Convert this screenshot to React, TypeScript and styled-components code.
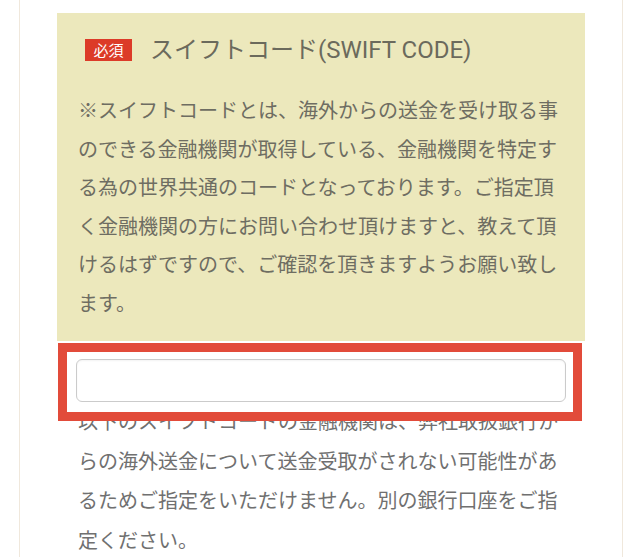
import React from 'react'
import styled, { createGlobalStyle } from 'styled-components'

const GlobalStyle = createGlobalStyle`
    html, body {
        margin: 0;
        padding: 0;
        background: #ffffff;
    }
    body {
        font-family: Roboto, "Noto Sans CJK JP", sans-serif;
    }
`

const Page = styled.div`
    width: 640px;
    height: 557px;
    overflow: hidden;
`

const Card = styled.div`
    margin: 0 17px 0 19px;
    min-height: 557px;
    box-sizing: border-box;
    border-left: 1px solid #f0e8dc;
    border-right: 1px solid #f0e8dc;
    padding: 13px 37px 0 37px;
`

const Panel = styled.div`
    background: #ece8bc;
    padding: 25px 21px 19px 21px;
`

const Heading = styled.div`
    display: flex;
    align-items: center;
    height: 25px;
    padding-left: 7px;
    margin-bottom: 28px;
`

const Badge = styled.span`
    display: inline-flex;
    align-items: center;
    justify-content: center;
    width: 47px;
    height: 22px;
    margin-top: -2px;
    background: #dc3b28;
    color: #ffffff;
    font-size: 15px;
    font-family: "Noto Sans CJK JP", sans-serif;
    margin-right: 18px;
`

const Title = styled.h2`
    margin: 0;
    font-size: 24px;
    font-weight: 400;
    color: #6b6a5c;
    line-height: 25px;
    white-space: nowrap;
`

const Note: any = styled.p`
    margin: ${(p: any) => p['data-plain'] ? '-11px 0 0 0' : '0'};
    padding: ${(p: any) => p['data-plain'] ? '0 21px' : '0'};
    font-size: 20px;
    line-height: ${(p: any) => p['data-plain'] ? '39.5px' : '38.5px'};
    color: ${(p: any) => p['data-plain'] ? '#707070' : '#6e6d62'};
    font-family: "Noto Sans CJK JP", sans-serif;
    line-break: normal;
`

const Field = styled.div`
    margin: 11px 12px 0 10px;
    height: 60px;
    box-sizing: border-box;
    padding: 7px 7px 0 9px;
    background: #ffffff;
    outline: 9px solid #e24b3a;
    position: relative;
    z-index: 1;
`

const Input = styled.input`
    display: block;
    width: 100%;
    height: 43px;
    box-sizing: border-box;
    border: 1px solid #cbcbcb;
    border-radius: 6px;
    background: #ffffff;
    box-shadow: inset 0 1px 2px rgba(0, 0, 0, 0.05);
    font-size: 18px;
    padding: 0 10px;
    outline: none;
`

const App = () => (
    <Page>
        <GlobalStyle />
        <Card>
            <Panel>
                <Heading>
                    <Badge>必須</Badge>
                    <Title>スイフトコード(SWIFT CODE)</Title>
                </Heading>
                <Note>
                    ※スイフトコードとは、海外からの送金を受け取る事のできる金融機関が取得している、金融機関を特定する為の世界共通のコードとなっております。ご指定頂く金融機関の方にお問い合わせ頂けますと、教えて頂けるはずですので、ご確認を頂きますようお願い致します。
                </Note>
            </Panel>
            <Field>
                <Input type="text" />
            </Field>
            <Note data-plain>
                以下のスイフトコードの金融機関は、弊社取扱銀行からの海外送金について送金受取がされない可能性があるためご指定をいただけません。別の銀行口座をご指定ください。
            </Note>
        </Card>
    </Page>
)

export default App
